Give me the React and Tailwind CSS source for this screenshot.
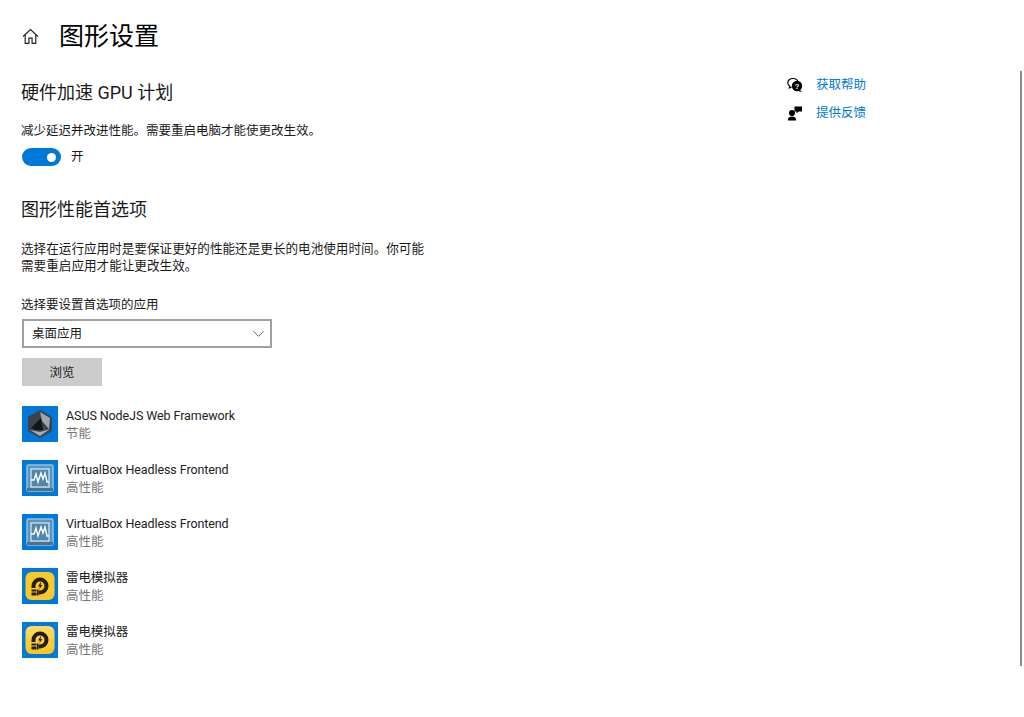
import React from "react";

const fontStack = "font-['Roboto','Noto_Sans_CJK_SC',sans-serif]";

const AsusIcon = () => (
  <svg viewBox="0 0 36 36" className="h-9 w-9">
    <rect width="36" height="36" fill="#0078d7" />
    <path d="M18 4 L30 11 V25 L18 32 L6 25 V11 Z" fill="#3f4349" />
    <path d="M18 6 L28 12 L27 23 L20 15 Z" fill="#a0a5ab" />
    <path d="M9 22 L19 12 L21 24 L13 24 Z" fill="#131518" />
    <path d="M8 24 L18 26 L28 23 L18 30 Z" fill="#a9adb2" />
  </svg>
);

const VboxIcon = () => (
  <svg viewBox="0 0 36 36" className="h-9 w-9">
    <rect width="36" height="36" fill="#0078d7" />
    <rect x="5" y="5" width="26" height="26" rx="1" fill="#5e93b8" stroke="#8fc4e0" strokeWidth="1.5" />
    <path d="M5 31 H31 V28 H5 Z" fill="#56707f" />
    <rect x="9" y="9" width="18" height="18" fill="#4f86ad" stroke="#d8ecf6" strokeWidth="1.2" />
    <path d="M9 20 H12 L14 14 L16 22 L19 13 L21 19 L23 13 L25 22 H27" fill="none" stroke="#ffffff" strokeWidth="1.4" />
  </svg>
);

const LdIcon = ({ light }) => (
  <svg viewBox="0 0 36 36" className="h-9 w-9">
    <defs>
      <linearGradient id="ldLight" x1="0" y1="0" x2="0" y2="1">
        <stop offset="0" stopColor="#fddc6a" />
        <stop offset="1" stopColor="#f9c41e" />
      </linearGradient>
    </defs>
    <rect width="36" height="36" fill="#0078d7" />
    <rect x="3.5" y="4" width="29" height="28" rx="6" fill={light ? "url(#ldLight)" : "#fac927"} />
    <path d="M9.5 20 V18 A8.5 8.5 0 1 1 18 26.5 H16.5 V22.5 H18 A4.5 4.5 0 1 0 13.5 18 V20 Z" fill="#231f16" />
    <rect x="9.5" y="21.5" width="5" height="2" fill="#231f16" />
    <rect x="9.5" y="24.5" width="5" height="3" fill="#231f16" />
    <rect x="15" y="21.5" width="1.5" height="6" fill="#231f16" />
    <path d="M19 13.5 L16 18.5 H18 L17.2 21.5 L20.5 17 H18.7 Z" fill="#231f16" />
  </svg>
);

const apps = [
  { name: "ASUS NodeJS Web Framework", mode: "节能", Icon: AsusIcon },
  { name: "VirtualBox Headless Frontend", mode: "高性能", Icon: VboxIcon },
  { name: "VirtualBox Headless Frontend", mode: "高性能", Icon: VboxIcon },
  { name: "雷电模拟器", mode: "高性能", Icon: LdIcon },
  { name: "雷电模拟器", mode: "高性能", Icon: LdIcon, light: true },
];

export default function App() {
  return (
    <div className={`relative h-[717px] w-[1024px] overflow-hidden bg-white text-[#1a1a1a] ${fontStack}`}>
      {/* scrollbar */}
      <div className="absolute left-[1020px] top-[71px] h-[595px] w-[2px] bg-[#8a8a8a]" />

      <div className="flex">
        {/* Main column */}
        <div className="w-[765px] shrink-0 pl-[21px]">
          <div className="flex h-[72px] items-center">
            <svg viewBox="0 0 16 16" className="ml-px h-[17px] w-[17px] text-[#222]" fill="none" stroke="currentColor" strokeWidth="1.1">
              <path d="M1 8 L8 1.5 L15 8" />
              <path d="M3 6.5 V14.5 H6.5 V9.5 H9.5 V14.5 H13 V6.5" />
            </svg>
            <h1 className="ml-[20px] text-[25px] leading-none text-black">图形设置</h1>
          </div>

          <h2 className="mt-[9px] h-[24px] text-[18px] leading-[24px]">硬件加速 GPU 计划</h2>
          <p className="mt-[17px] h-[18px] text-[12.5px] leading-[18px]">
            减少延迟并改进性能。需要重启电脑才能使更改生效。
          </p>
          <div className="mt-[8px] ml-px flex h-[18px] items-center">
            <div className="flex h-[18px] w-[39px] items-center justify-end rounded-full bg-[#0078d7] pr-[5px]">
              <div className="h-[9px] w-[9px] rounded-full bg-white" />
            </div>
            <span className="ml-[10px] text-[12.5px]">开</span>
          </div>

          <h2 className="mt-[32px] h-[24px] text-[18px] leading-[24px]">图形性能首选项</h2>
          <p className="mt-[18px] w-[408px] text-[12.6px] leading-[17px]">
            选择在运行应用时是要保证更好的性能还是更长的电池使用时间。你可能需要重启应用才能让更改生效。
          </p>

          <p className="mt-[22px] h-[18px] text-[12.5px] leading-[18px]">选择要设置首选项的应用</p>
          <div className="mt-[5px] ml-px flex h-[29px] w-[250px] items-center justify-between border-2 border-[#a0a0a0] pl-[8px] pr-[5px] text-[12.5px]">
            <span className="pt-px">桌面应用</span>
            <svg viewBox="0 0 14 8" className="h-2 w-[13px] text-[#555]" fill="none" stroke="currentColor" strokeWidth="1">
              <path d="M1.5 1 L7 6.5 L12.5 1" />
            </svg>
          </div>
          <button className="ml-px mt-[10px] block h-[28px] w-[80px] bg-[#cccccc] pt-[2px] text-center text-[12.5px]">浏览</button>

          <ul className="ml-px mt-[20px] flex flex-col gap-[18px]">
            {apps.map((app, i) => (
              <li key={i} className="flex h-9 items-center">
                <app.Icon light={app.light} />
                <div className="ml-[8px] mt-[2px] text-[12.5px] leading-[18px]">
                  <div className="tracking-[-0.09px] text-[#222]">{app.name}</div>
                  <div className="text-[#767676]">{app.mode}</div>
                </div>
              </li>
            ))}
          </ul>
        </div>

        {/* Help links */}
        <div className="pl-[22px] pt-[76px]">
          <div className="flex h-[18px] items-center">
            <svg viewBox="0 0 16 16" className="h-4 w-4 text-black">
              <path d="M6 1.5 C2.8 1.5 .8 3.4 .8 5.8 C.8 7.3 1.6 8.5 2.8 9.3 L2.4 11 L4.6 10" fill="none" stroke="currentColor" strokeWidth="1.2" />
              <path d="M6 1.5 C8.5 1.5 10.5 2.8 11 4.6" fill="none" stroke="currentColor" strokeWidth="1.2" />
              <circle cx="10" cy="9" r="5.2" fill="currentColor" />
              <path d="M13 13 L15 15 L11.5 14.2 Z" fill="currentColor" />
              <text x="10" y="11.6" textAnchor="middle" fontSize="7.5" fontWeight="700" fill="#fff" fontFamily="Liberation Sans">?</text>
            </svg>
            <a className="ml-[13px] text-[12.5px] text-[#0078d7]">获取帮助</a>
          </div>
          <div className="mt-[10px] flex h-[18px] items-center">
            <svg viewBox="0 0 16 16" className="h-4 w-4 text-black" fill="currentColor">
              <circle cx="5" cy="8" r="3" />
              <path d="M.8 15.5 C.8 12.5 2.5 11.5 5 11.5 C7.5 11.5 9.2 12.5 9.2 15.5 Z" />
              <path d="M7.5 1.5 H15 V6.5 H11.5 L9.5 8.5 V6.5 H7.5 Z" />
            </svg>
            <a className="ml-[13px] text-[12.5px] text-[#0078d7]">提供反馈</a>
          </div>
        </div>
      </div>
    </div>
  );
}
